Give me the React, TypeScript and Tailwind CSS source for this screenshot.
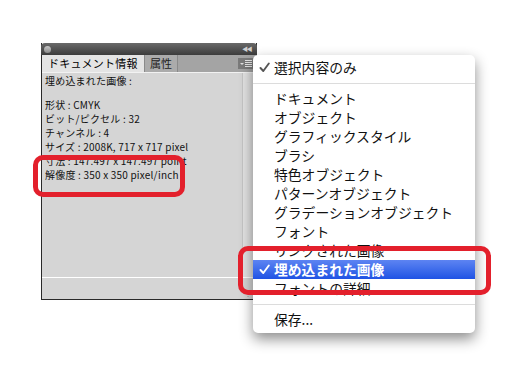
import React from "react";

const jp = { fontFamily: '"Noto Sans CJK JP", "Noto Sans", sans-serif' };

const panelLines = [
  "形状 : CMYK",
  "ビット/ピクセル : 32",
  "チャンネル : 4",
  "サイズ : 2008K, 717 x 717 pixel",
  "寸法 : 147.497 x 147.497 point",
  "解像度 : 350 x 350 pixel/inch",
];

const menuItems = [
  "ドキュメント",
  "オブジェクト",
  "グラフィックスタイル",
  "ブラシ",
  "特色オブジェクト",
  "パターンオブジェクト",
  "グラデーションオブジェクト",
  "フォント",
  "リンクされた画像",
  "埋め込まれた画像",
  "フォントの詳細",
];

function Check({ color }: { color: string }) {
  return (
    <svg width="11" height="11" viewBox="0 0 11 11" className="shrink-0">
      <path d="M1.5 6 L4.3 9 L9.8 1.5" fill="none" stroke={color} strokeWidth="1.9" strokeLinecap="round" strokeLinejoin="round" />
    </svg>
  );
}

export default function App() {
  return (
    <div className="relative w-[528px] h-[386px] bg-white overflow-hidden" style={jp}>
      {/* Panel */}
      <div className="absolute left-[41px] top-[43px] w-[216px] h-[257px] flex flex-col border-x border-b border-[#2a2a2a]">
        <div className="h-[12px] flex items-center justify-between px-[2px] bg-gradient-to-b from-[#6a6a6a] to-[#3c3c3c] rounded-t-[4px] -mx-px">
          <div className="w-[7px] h-[7px] rounded-full bg-gradient-to-b from-[#c8c8c8] to-[#8a8a8a] ml-[1px]" />
          <div className="text-[6px] leading-none text-[#d0d0d0] tracking-[-1.5px] mr-[4px]">◀◀</div>
        </div>
        <div className="h-[18px] flex items-stretch bg-[#a4a4a4] border-b border-[#f2f2f2]">
          <div className="w-[103px] bg-[#e4e4e4] border-r border-[#8a8a8a] flex items-center pl-[6px] text-[11px] tracking-[0.2px] text-black leading-none">
            ドキュメント情報
          </div>
          <div className="w-[33px] bg-[#ababab] border-r border-[#8a8a8a] flex items-center pl-[5px] text-[11px] text-[#222] leading-none">
            属性
          </div>
          <div className="flex-1" />
          <div className="flex items-center pr-[2px]">
            <div className="w-[16px] h-[11px] bg-[#7a7a7a] flex items-center justify-center gap-[1px]">
              <div className="w-0 h-0 border-l-[2px] border-r-[2px] border-t-[2px] border-l-transparent border-r-transparent border-t-[#e0e0e0]" />
              <div className="flex flex-col gap-[1px]">
                <div className="w-[7px] h-px bg-[#e6e6e6]" />
                <div className="w-[7px] h-px bg-[#e6e6e6]" />
                <div className="w-[7px] h-px bg-[#e6e6e6]" />
                <div className="w-[7px] h-px bg-[#e6e6e6]" />
              </div>
            </div>
          </div>
        </div>
        <div className="flex-1 flex bg-[#d5d5d5]">
          <div className="flex-1 pl-[3px] pt-[1px] text-[10px] leading-[14px] tracking-[0.2px] text-[#111] overflow-hidden">
            <div>埋め込まれた画像 :</div>
            <div className="h-[10px]" />
            {panelLines.map((l) => (
              <div key={l} className="whitespace-nowrap">{l}</div>
            ))}
          </div>
          <div className="w-[14px] bg-[#e2e2e2] border-l border-[#c4c4c4]" />
        </div>
        <div className="h-px bg-white" />
        <div className="h-[21px] bg-[#d5d5d5] relative">
          <div className="absolute right-[3px] bottom-[2px] text-[6px] leading-none text-[#888]">⋰</div>
        </div>
      </div>

      {/* Popup menu */}
      <div className="absolute left-[253px] top-[55px] w-[222px] h-[278px] bg-white rounded-[5px] shadow-[0_6px_14px_rgba(0,0,0,0.45)] py-[3px] text-[13.8px] text-[#111] flex flex-col">
        <div className="h-[19px] flex items-center leading-none pl-[6px]">
          <Check color="#555" />
          <span className="ml-[4px]">選択内容のみ</span>
        </div>
        <div className="h-[12px] flex items-center"><div className="w-full h-px bg-[#dcdcdc]" /></div>
        {menuItems.map((m) =>
          m === "埋め込まれた画像" ? (
            <div key={m} className="h-[19px] flex items-center leading-none pl-[6px] bg-gradient-to-b from-[#5d84f2] to-[#1f52e4] text-white font-bold">
              <Check color="#ffffff" />
              <span className="ml-[4px]">{m}</span>
            </div>
          ) : (
            <div key={m} className="h-[19px] flex items-center leading-none pl-[21px]">{m}</div>
          )
        )}
        <div className="h-[12px] flex items-center"><div className="w-full h-px bg-[#dcdcdc]" /></div>
        <div className="h-[19px] flex items-center leading-none pl-[21px]">保存...</div>
      </div>

      {/* Annotations */}
      <div className="absolute left-[33px] top-[155px] w-[152px] h-[42px] border-[5px] border-[#e3202c] rounded-[10px]" />
      <div className="absolute left-[238px] top-[246px] w-[253px] h-[49px] border-[5px] border-[#e3202c] rounded-[10px]" />
    </div>
  );
}
